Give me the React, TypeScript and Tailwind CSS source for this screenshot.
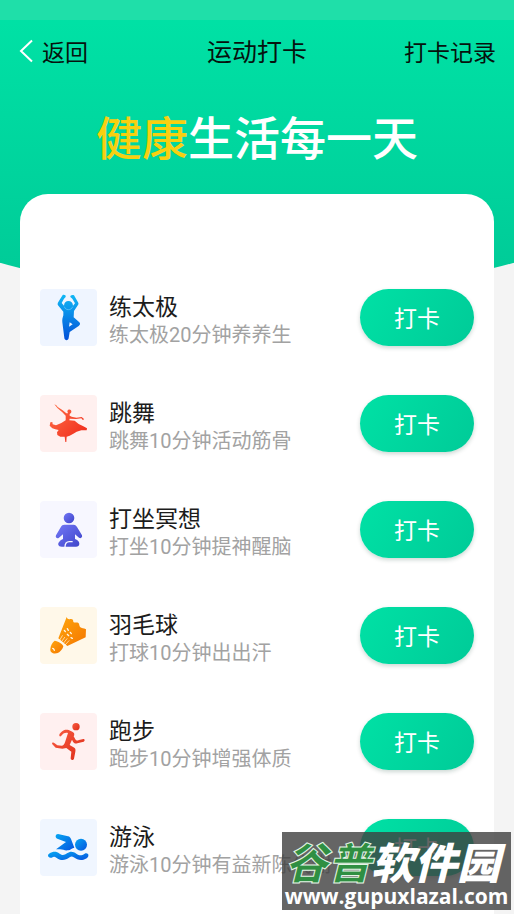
import type { FC, ReactNode } from "react";

type Exercise = {
  name: string;
  hint: string;
  tile: string;
  icon: ReactNode;
};

const Gradient: FC<{ id: string; from: string; to: string }> = ({
  id,
  from,
  to,
}) => (
  <linearGradient id={id} x1="0" y1="0" x2="1" y2="1">
    <stop offset="0" stopColor={from} />
    <stop offset="1" stopColor={to} />
  </linearGradient>
);

const TaiChiIcon = () => (
  <svg viewBox="30 30 171 171" className="size-full" aria-hidden="true">
    <defs>
      <linearGradient id="taichi" x1="0" y1="0" x2="0" y2="1">
        <stop offset="0" stopColor="#10b8f5" />
        <stop offset="1" stopColor="#0350d8" />
      </linearGradient>
    </defs>
    <path
      fill="url(#taichi)"
      fillRule="evenodd"
      d="M98 48C102 46 109 49 107 54L102 59L95 72L102 80C102 71 108 66 115 66C123 66 129 71 129 80L135 73L127 59L121 54C120 49 127 46 132 49L144 70C147 74 145 78 142 81L132 96L131 115L148 130C152 134 150 138 146 141L119 159L116 177C115 186 104 185 103 177L97 130C96 122 98 116 100 109L100 98L84 79C82 76 83 72 85 69ZM119 130L117 143L128 136Z"
    />
    <path
      d="M103 83c2 6 6 9 12 9s11-3 13-9"
      fill="none"
      stroke="#6fcdfa"
      strokeWidth="2"
    />
  </svg>
);

const DanceIcon = () => (
  <svg viewBox="30 33 171 171" className="size-full" aria-hidden="true">
    <defs>
      <Gradient id="dance" from="#ff7048" to="#ee2517" />
    </defs>
    <path
      fill="url(#dance)"
      d="M73 61L79 64L83 69L97 78L109 88L114 88L112 82C113 77 119 75 123 79C126 84 123 88 119 90L119 95L125 98L139 101L155 99L162 105L159 109L154 103L138 105L119 104L118 109L134 110L146 120L160 127L171 133L170 139L154 139L140 143L130 149L119 155L110 158L109 174L106 174L104 158L91 158L82 153L81 145L86 138L76 136L67 133L59 125L61 115L67 114L68 121L78 124L94 117L107 109L107 95L97 85L82 72Z"
    />
  </svg>
);

const MeditationIcon = () => (
  <svg viewBox="30 33 171 171" className="size-full" aria-hidden="true">
    <defs>
      <Gradient id="meditation" from="#7378f6" to="#3d43c9" />
    </defs>
    <g fill="url(#meditation)">
      <circle cx="117" cy="84" r="16" />
      <path d="M103 104H131C136 104 139 107 141 111L156 136C158 142 152 147 147 143L135 133V147C142 149 148 154 148 161C148 167 144 170 138 170H95C84 170 82 160 88 155C91 151 95 149 99 147V133L86 144C81 147 75 142 78 136L93 110C95 106 98 104 103 104Z" />
    </g>
    <path
      d="M105 171c0-10 4-16 13-16h10"
      fill="none"
      stroke="#f7f7ff"
      strokeWidth="4"
    />
  </svg>
);

const BadmintonIcon = () => (
  <svg viewBox="30 33 171 171" className="size-full" aria-hidden="true">
    <defs>
      <Gradient id="badminton" from="#ffa60c" to="#f47600" />
    </defs>
    <g fill="url(#badminton)">
      <path d="M110 63C112 69 116 71 121 69C128 68 130 72 130 78C134 82 139 78 144 80C149 83 147 88 150 93C155 98 161 95 168 100L167 124L112 150L85 127Z" />
      <path d="M74 134C84 136 97 143 100 150C99 158 90 169 81 172C68 174 60 169 61 159C62 149 67 139 74 134Z" />
    </g>
    <g stroke="#fff8e9" strokeLinecap="round">
      <path
        d="M103 103l3 4M112 98l3 5M112 115l4 4M121 109l3 4M123 125l4 2"
        strokeWidth="4"
      />
      <path
        d="M88 134l9-15M94 138l10-14M100 142l11-14M106 146l11-12"
        strokeWidth="2"
      />
    </g>
    <path
      d="M68 157c2 0 4 3 5 6"
      fill="none"
      stroke="#fff8e9"
      strokeWidth="4"
      strokeLinecap="round"
    />
  </svg>
);

const RunIcon = () => (
  <svg viewBox="30 33 171 171" className="size-full" aria-hidden="true">
    <defs>
      <Gradient id="run" from="#f95c42" to="#dd2c18" />
    </defs>
    <g fill="url(#run)">
      <circle cx="138" cy="74" r="11" />
      <path d="M88 101C87 97 90 94 94 90C102 82 109 82 116 84L127 89C134 92 134 98 131 103L136 112C138 116 141 117 147 114L160 111C164 111 166 116 161 119L142 124C135 126 132 123 129 119L126 113L119 129L133 137C137 140 137 144 136 149L132 170C130 176 122 175 122 169L124 149L109 138L97 140L77 137L67 127C64 122 70 120 74 124L82 130L96 131C101 130 103 126 105 121L114 93C105 91 101 94 96 99C93 103 90 105 88 101Z" />
    </g>
  </svg>
);

const SwimIcon = () => (
  <svg viewBox="30 30 171 171" className="size-full" aria-hidden="true">
    <defs>
      <Gradient id="swim" from="#05a6f2" to="#0754df" />
    </defs>
    <g fill="url(#swim)">
      <circle cx="153" cy="107" r="18" />
      <path d="M84 75L114 82C119 83 121 86 123 90L133 116C126 117 122 123 114 124C104 126 100 121 90 121H78L108 99L82 89C74 86 76 75 84 75Z" />
      <path d="M54 139C55 134 60 132 66 130C75 127 81 129 89 134C98 140 103 138 111 133C121 126 129 127 139 134C149 140 154 140 164 134C170 131 177 135 175 141C174 147 163 153 153 153C145 153 138 150 131 145C127 142 123 142 119 145C104 156 91 155 79 146C73 142 71 143 65 146C59 148 54 145 54 139Z" />
    </g>
  </svg>
);

const exercises: Exercise[] = [
  {
    name: "练太极",
    hint: "练太极20分钟养养生",
    tile: "bg-[#eff5ff]",
    icon: <TaiChiIcon />,
  },
  {
    name: "跳舞",
    hint: "跳舞10分钟活动筋骨",
    tile: "bg-[#fff0ef]",
    icon: <DanceIcon />,
  },
  {
    name: "打坐冥想",
    hint: "打坐10分钟提神醒脑",
    tile: "bg-[#f7f7ff]",
    icon: <MeditationIcon />,
  },
  {
    name: "羽毛球",
    hint: "打球10分钟出出汗",
    tile: "bg-[#fff8e9]",
    icon: <BadmintonIcon />,
  },
  {
    name: "跑步",
    hint: "跑步10分钟增强体质",
    tile: "bg-[#fff0f0]",
    icon: <RunIcon />,
  },
  {
    name: "游泳",
    hint: "游泳10分钟有益新陈代谢",
    tile: "bg-[#f0f6ff]",
    icon: <SwimIcon />,
  },
];

const Header = () => (
  <header className="grid h-16 grid-cols-[1fr_auto_1fr] items-center px-[18px] pb-0.5 text-[#06120e]">
    <button type="button" className="flex items-center gap-2 text-[23px]">
      <svg
        viewBox="0 0 16 24"
        className="h-6 w-4"
        fill="none"
        stroke="#fff"
        strokeWidth="2"
        aria-hidden="true"
      >
        <path d="M14 1.500L3 12L14 22.500" />
      </svg>
      返回
    </button>
    <h1 className="text-[25px]">运动打卡</h1>
    <a href="#records" className="justify-self-end text-[23px]">
      打卡记录
    </a>
  </header>
);

const ExerciseRow: FC<{ item: Exercise }> = ({ item }) => (
  <li className="flex h-[57px] items-center">
    <div
      className={`size-[57px] shrink-0 overflow-hidden rounded-[4px] ${item.tile}`}
    >
      {item.icon}
    </div>
    <div className="ml-3 min-w-0 flex-1 pt-1 whitespace-nowrap">
      <h2 className="text-[23px] leading-7 text-[#1c1c1c]">{item.name}</h2>
      <p className="mt-0.5 font-[Roboto,'Noto_Sans_CJK_SC',sans-serif] text-[20px] leading-7 text-[#a2a2a2]">
        {item.hint}
      </p>
    </div>
    <button
      type="button"
      className="h-[57px] w-[114px] shrink-0 rounded-full bg-linear-120 from-[#00e1a5] to-[#00cb98] text-[23px] text-white shadow-[0_2px_4px_rgba(0,60,40,0.2)]"
    >
      打卡
    </button>
  </li>
);

const Watermark = () => (
  <div className="absolute right-[3px] bottom-1 h-[78px] w-[229px] overflow-hidden bg-[#3e3e3e]/80 text-center whitespace-nowrap text-white">
    <p className="pt-1 pr-2 text-[43px] leading-[48px] font-black italic">
      <span className="text-[#2f8f42] [-webkit-text-stroke:1px_#e4f5e6]">
        谷普
      </span>
      软件园
    </p>
    <p className="font-['Open_Sans',sans-serif] text-[21px] leading-6 font-bold">
      www.gupuxlazal.com
    </p>
  </div>
);

const App: FC = () => {
  return (
    <div className="relative flex min-h-screen flex-col overflow-hidden bg-[#f4f4f4] font-['Noto_Sans_CJK_SC',sans-serif]">
      <div className="absolute top-0 left-[-10%] h-[290px] w-[120%] bg-linear-to-b from-[#00e3a6] to-[#00ca97] [border-bottom-left-radius:50%_61px] [border-bottom-right-radius:50%_61px]" />
      <div className="relative flex flex-1 flex-col">
        <div className="h-5 bg-[#1fdfa9]" />
        <Header />
        <p className="flex h-[110px] items-center justify-center pb-2 text-[46px] font-medium text-white">
          <span className="text-[#f8d010]">健康</span>
          生活每一天
        </p>
        <main className="mx-5 flex-1 rounded-t-[28px] bg-white px-5 pt-[95px] pb-8">
          <ul className="flex flex-col gap-[49px]">
            {exercises.map((item) => (
              <ExerciseRow key={item.name} item={item} />
            ))}
          </ul>
        </main>
      </div>
      <Watermark />
    </div>
  );
};

export default App;
